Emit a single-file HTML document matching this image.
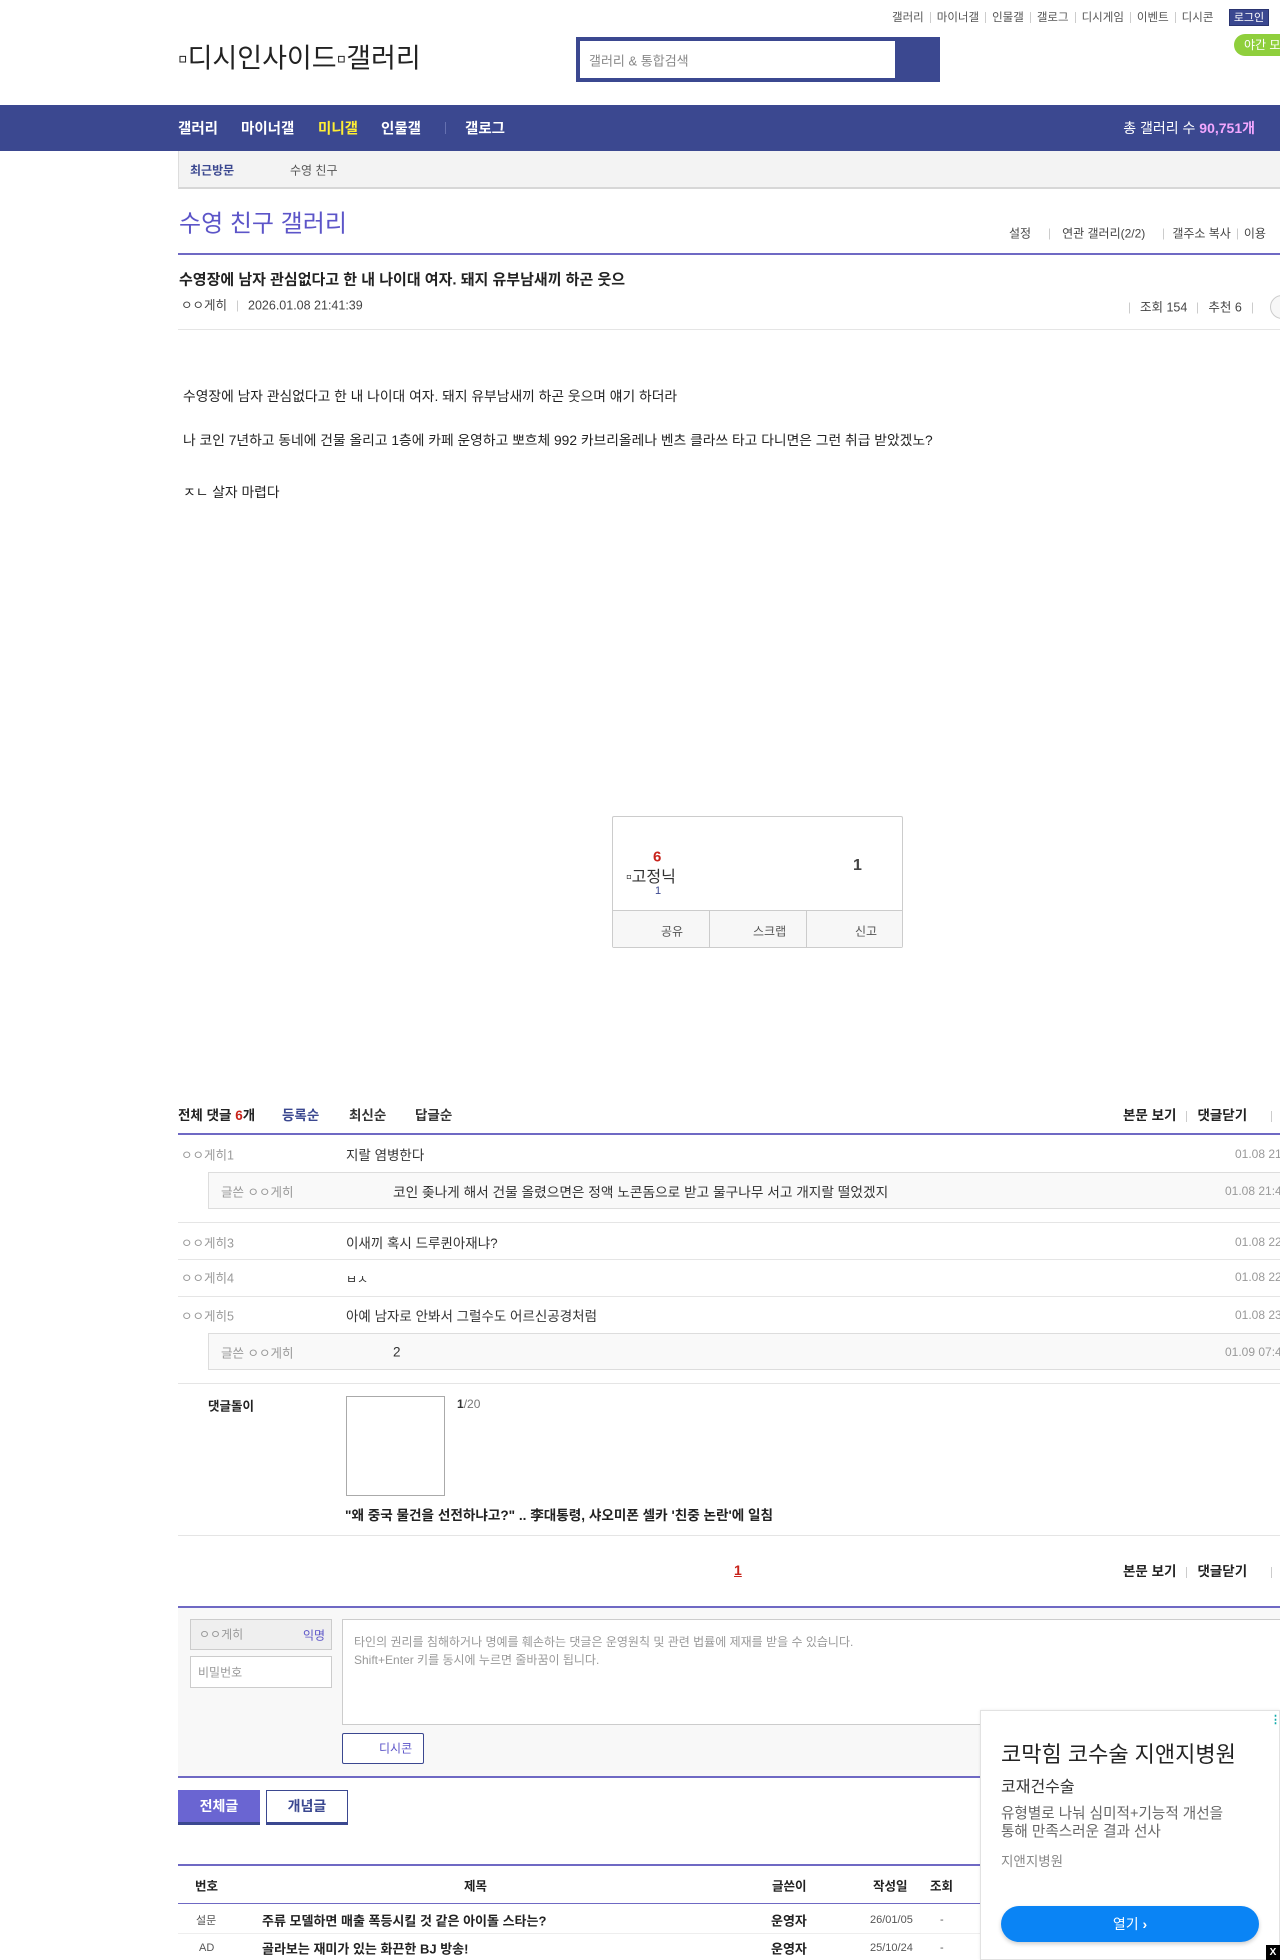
<!DOCTYPE html>
<html><head><meta charset="utf-8">
<style>
*{margin:0;padding:0;box-sizing:border-box}
html,body{width:1280px;height:1960px;overflow:hidden;background:#fff}
body{position:relative;font-family:"Liberation Sans","Noto Sans CJK KR",sans-serif;color:#333;font-size:13px}
.a{position:absolute;white-space:nowrap}
.vc{transform:translateY(-50%)}
.sep{display:inline-block;width:1px;height:11px;background:#ccc;margin:0 6px;vertical-align:middle}
.hl{position:absolute;height:1px;background:#e5e5e5}
.pl{position:absolute;height:2px;background:#6f69c4}
.gray{color:#999}
</style></head><body>

<!-- top links -->
<div class="a vc" style="left:892px;top:17px;font-size:11.5px;color:#555">갤러리<span class="sep"></span>마이너갤<span class="sep"></span>인물갤<span class="sep"></span>갤로그<span class="sep"></span>디시게임<span class="sep"></span>이벤트<span class="sep"></span>디시콘</div>
<div class="a" style="left:1229px;top:9px;width:40px;height:17px;background:#3b4890;color:#fff;font-size:11px;text-align:center;line-height:17px;border:1px solid #2a3470">로그인</div>
<div class="a" style="left:1234px;top:34px;width:60px;height:22px;background:#8fcf3c;color:#fff;font-size:12px;line-height:22px;padding-left:10px;border-radius:11px">야간 모드</div>

<!-- logo -->
<div class="a vc" style="left:178px;top:56px;font-size:27px;color:#222">▫디시인사이드▫갤러리</div>

<!-- search -->
<div class="a" style="left:576px;top:37px;width:364px;height:45px;background:#3b4890"></div>
<div class="a" style="left:580px;top:41px;width:315px;height:37px;background:#fff"></div>
<div class="a vc" style="left:589px;top:60px;font-size:13px;color:#888">갤러리 &amp; 통합검색</div>

<!-- nav -->
<div class="a" style="left:0;top:105px;width:1280px;height:46px;background:#3b4890"></div>
<div class="a vc" style="left:178px;top:128px;font-size:14.5px;font-weight:bold;color:#fff">갤러리</div>
<div class="a vc" style="left:241px;top:128px;font-size:14.5px;font-weight:bold;color:#fff">마이너갤</div>
<div class="a vc" style="left:318px;top:128px;font-size:14.5px;font-weight:bold;color:#ffee33">미니갤</div>
<div class="a vc" style="left:381px;top:128px;font-size:14.5px;font-weight:bold;color:#fff">인물갤</div>
<div class="a" style="left:445px;top:122px;width:1px;height:12px;background:#6570b0"></div>
<div class="a vc" style="left:465px;top:128px;font-size:14.5px;font-weight:bold;color:#fff">갤로그</div>
<div class="a vc" style="right:25px;top:128px;font-size:14px;color:#fff">총 갤러리 수 <b style="color:#f3a7ff">90,751개</b></div>

<!-- recent bar -->
<div class="a" style="left:178px;top:151px;width:1110px;height:38px;background:#f3f3f3;border-left:1px solid #ddd;border-bottom:2px solid #d7d7d7"></div>
<div class="a vc" style="left:190px;top:170px;font-size:12px;font-weight:bold;color:#3b4890">최근방문</div>
<div class="a vc" style="left:290px;top:170px;font-size:12px;color:#555">수영 친구</div>

<!-- gallery title -->
<div class="a vc" style="left:179px;top:221px;font-size:24px;color:#5c55c8">수영 친구 갤러리</div>
<div class="a vc" style="left:1009px;top:233px;font-size:12px;color:#444">설정<span class="sep" style="margin:0 12px 0 18px"></span>연관 갤러리(2/2)<span class="sep" style="margin:0 8px 0 18px"></span>갤주소 복사<span class="sep"></span>이용</div>
<div class="pl" style="left:178px;top:253px;width:1110px"></div>

<!-- post header -->
<div class="a vc" style="left:179px;top:279px;font-size:15px;font-weight:bold;color:#222">수영장에 남자 관심없다고 한 내 나이대 여자. 돼지 유부남새끼 하곤 웃으</div>
<div class="a vc" style="left:181px;top:304px;font-size:12.5px;color:#444">ㅇㅇ게히<span class="sep" style="margin:0 10px"></span>2026.01.08 21:41:39</div>
<div class="a vc" style="left:1129px;top:306px;font-size:12.5px;color:#444"><span class="sep" style="margin:0 10px 0 0"></span>조회 154<span class="sep" style="margin:0 10px"></span>추천 6<span class="sep" style="margin:0 10px"></span></div>
<div class="a" style="left:1270px;top:295px;width:24px;height:24px;border:1px solid #ccc;border-radius:12px;background:#f7f7f7"></div>
<div class="hl" style="left:178px;top:329px;width:1110px"></div>

<!-- body -->
<div class="a vc" style="left:183px;top:395px;font-size:13.8px;color:#222">수영장에 남자 관심없다고 한 내 나이대 여자. 돼지 유부남새끼 하곤 웃으며 얘기 하더라</div>
<div class="a vc" style="left:183px;top:439px;font-size:13.8px;color:#222">나 코인 7년하고 동네에 건물 올리고 1층에 카페 운영하고 뽀흐체 992 카브리올레나 벤츠 클라쓰 타고 다니면은 그런 취급 받았겠노?</div>
<div class="a vc" style="left:183px;top:491px;font-size:13.8px;color:#222">ㅈㄴ 살자 마렵다</div>

<!-- recommend box -->
<div class="a" style="left:612px;top:816px;width:291px;height:132px;border:1px solid #ccc;border-radius:2px"></div>
<div class="a" style="left:613px;top:910px;width:289px;height:37px;background:#f7f7f7;border-top:1px solid #ccc"></div>
<div class="a" style="left:709px;top:911px;width:1px;height:36px;background:#ccc"></div>
<div class="a" style="left:806px;top:911px;width:1px;height:36px;background:#ccc"></div>
<div class="a vc" style="left:653px;top:857px;font-size:15px;font-weight:bold;color:#c8231b">6</div>
<div class="a vc" style="left:626px;top:875px;font-size:16px;color:#333">▫고정닉</div>
<div class="a vc" style="left:655px;top:891px;font-size:11px;color:#3b4890">1</div>
<div class="a vc" style="left:853px;top:866px;font-size:16px;font-weight:bold;color:#444">1</div>
<div class="a vc" style="left:661px;top:931px;font-size:12px;color:#555">공유</div>
<div class="a vc" style="left:753px;top:931px;font-size:12px;color:#555">스크랩</div>
<div class="a vc" style="left:855px;top:931px;font-size:12px;color:#555">신고</div>

<!-- comments header -->
<div class="a vc" style="left:178px;top:1114px;font-size:13.5px;font-weight:bold;color:#222">전체 댓글 <span style="color:#c8231b">6</span>개</div>
<div class="a vc" style="left:282px;top:1114px;font-size:13.5px;font-weight:bold;color:#3b4890">등록순</div>
<div class="a vc" style="left:349px;top:1114px;font-size:13.5px;font-weight:bold;color:#333">최신순</div>
<div class="a vc" style="left:415px;top:1114px;font-size:13.5px;font-weight:bold;color:#333">답글순</div>
<div class="a vc" style="left:1123px;top:1114px;font-size:13.5px;font-weight:bold;color:#222">본문 보기<span class="sep" style="margin:0 10px"></span>댓글닫기<span class="sep" style="margin:0 0 0 24px"></span></div>
<div class="pl" style="left:178px;top:1133px;width:1110px"></div>

<!-- comments -->
<div class="a vc gray" style="left:181px;top:1154px;font-size:12.5px">ㅇㅇ게히1</div>
<div class="a vc" style="left:346px;top:1154px;font-size:13.5px;color:#333">지랄 염병한다</div>
<div class="a vc gray" style="left:1235px;top:1154px;font-size:12px">01.08 21:41</div>

<div class="a" style="left:208px;top:1172px;width:1090px;height:37px;background:#f9f9f9;border:1px solid #ddd;border-right:none"></div>
<div class="a vc gray" style="left:221px;top:1191px;font-size:12.5px">글쓴 ㅇㅇ게히</div>
<div class="a vc" style="left:393px;top:1191px;font-size:13.7px;color:#333">코인 좆나게 해서 건물 올렸으면은 정액 노콘돔으로 받고 물구나무 서고 개지랄 떨었겠지</div>
<div class="a vc gray" style="left:1225px;top:1191px;font-size:12px">01.08 21:4</div>
<div class="hl" style="left:178px;top:1222px;width:1110px"></div>

<div class="a vc gray" style="left:181px;top:1242px;font-size:12.5px">ㅇㅇ게히3</div>
<div class="a vc" style="left:346px;top:1242px;font-size:13.5px;color:#333">이새끼 혹시 드루퀸아재냐?</div>
<div class="a vc gray" style="left:1235px;top:1242px;font-size:12px">01.08 22</div>
<div class="hl" style="left:178px;top:1259px;width:1110px"></div>

<div class="a vc gray" style="left:181px;top:1277px;font-size:12.5px">ㅇㅇ게히4</div>
<div class="a vc" style="left:346px;top:1279px;font-size:12px;color:#333">ㅂㅅ</div>
<div class="a vc gray" style="left:1235px;top:1277px;font-size:12px">01.08 22</div>
<div class="hl" style="left:178px;top:1296px;width:1110px"></div>

<div class="a vc gray" style="left:181px;top:1315px;font-size:12.5px">ㅇㅇ게히5</div>
<div class="a vc" style="left:346px;top:1315px;font-size:13.5px;color:#333">아예 남자로 안봐서 그럴수도 어르신공경처럼</div>
<div class="a vc gray" style="left:1235px;top:1315px;font-size:12px">01.08 23</div>

<div class="a" style="left:208px;top:1333px;width:1090px;height:37px;background:#f9f9f9;border:1px solid #ddd;border-right:none"></div>
<div class="a vc gray" style="left:221px;top:1352px;font-size:12.5px">글쓴 ㅇㅇ게히</div>
<div class="a vc" style="left:393px;top:1352px;font-size:13.5px;color:#333">2</div>
<div class="a vc gray" style="left:1225px;top:1352px;font-size:12px">01.09 07:4</div>
<div class="hl" style="left:178px;top:1383px;width:1110px"></div>

<!-- 댓글돌이 -->
<div class="a vc" style="left:208px;top:1405px;font-size:12.5px;font-weight:bold;color:#222">댓글돌이</div>
<div class="a" style="left:346px;top:1396px;width:99px;height:100px;border:1px solid #aaa"></div>
<div class="a vc" style="left:457px;top:1404px;font-size:12px;color:#777"><b style="color:#333">1</b>/20</div>
<div class="a vc" style="left:345px;top:1514px;font-size:13.6px;font-weight:bold;color:#222">"왜 중국 물건을 선전하냐고?" .. 李대통령, 샤오미폰 셀카 '친중 논란'에 일침</div>
<div class="hl" style="left:178px;top:1535px;width:1110px"></div>

<!-- pagination -->
<div class="a vc" style="left:734px;top:1570px;font-size:14px;font-weight:bold;color:#c8231b;text-decoration:underline">1</div>
<div class="a vc" style="left:1123px;top:1570px;font-size:13.5px;font-weight:bold;color:#222">본문 보기<span class="sep" style="margin:0 10px"></span>댓글닫기<span class="sep" style="margin:0 0 0 24px"></span></div>

<!-- write area -->
<div class="a" style="left:178px;top:1606px;width:1110px;height:172px;background:#f8f8f8;border-top:2px solid #6f69c4;border-bottom:2px solid #6f69c4"></div>
<div class="a" style="left:190px;top:1619px;width:142px;height:31px;background:#efefef;border:1px solid #ccc"></div>
<div class="a vc gray" style="left:199px;top:1634px;font-size:12px">ㅇㅇ게히</div>
<div class="a vc" style="left:303px;top:1635px;font-size:12px;color:#5c55c8">익명</div>
<div class="a" style="left:190px;top:1656px;width:142px;height:32px;background:#fff;border:1px solid #ccc"></div>
<div class="a vc gray" style="left:198px;top:1672px;font-size:12px">비밀번호</div>
<div class="a" style="left:342px;top:1619px;width:950px;height:106px;background:#fff;border:1px solid #ccc"></div>
<div class="a" style="left:354px;top:1633px;font-size:12px;color:#999;line-height:18px">타인의 권리를 침해하거나 명예를 훼손하는 댓글은 운영원칙 및 관련 법률에 제재를 받을 수 있습니다.<br>Shift+Enter 키를 동시에 누르면 줄바꿈이 됩니다.</div>
<div class="a" style="left:342px;top:1733px;width:82px;height:31px;background:#fff;border:1px solid #3b4890;border-radius:2px"></div>
<div class="a vc" style="left:379px;top:1748px;font-size:12px;color:#5c55c8">디시콘</div>

<!-- list tabs -->
<div class="a" style="left:178px;top:1790px;width:82px;height:35px;background:#6a65d2;border-bottom:3px solid #3b4890;color:#fff;font-size:14px;font-weight:bold;text-align:center;line-height:33px">전체글</div>
<div class="a" style="left:266px;top:1790px;width:82px;height:35px;background:#fff;border:1px solid #3b4890;border-bottom:3px solid #3b4890;color:#3b4890;font-size:14px;font-weight:bold;text-align:center;line-height:31px">개념글</div>

<!-- table -->
<div class="pl" style="left:178px;top:1864px;width:1110px"></div>
<div class="a vc" style="left:195px;top:1885px;font-size:12.5px;font-weight:bold;color:#222">번호</div>
<div class="a vc" style="left:464px;top:1885px;font-size:12.5px;font-weight:bold;color:#222">제목</div>
<div class="a vc" style="left:772px;top:1885px;font-size:12.5px;font-weight:bold;color:#222">글쓴이</div>
<div class="a vc" style="left:873px;top:1885px;font-size:12.5px;font-weight:bold;color:#222">작성일</div>
<div class="a vc" style="left:930px;top:1885px;font-size:12.5px;font-weight:bold;color:#222">조회</div>
<div class="a" style="left:178px;top:1903px;width:1110px;height:1px;background:#6f69c4"></div>
<div class="a vc" style="left:196px;top:1920px;font-size:11px;color:#555">설문</div>
<div class="a vc" style="left:262px;top:1920px;font-size:13px;font-weight:bold;color:#222">주류 모델하면 매출 폭등시킬 것 같은 아이돌 스타는?</div>
<div class="a vc" style="left:771px;top:1920px;font-size:13px;font-weight:bold;color:#222">운영자</div>
<div class="a vc" style="left:870px;top:1920px;font-size:11px;color:#555">26/01/05</div>
<div class="a vc" style="left:940px;top:1920px;font-size:11px;color:#555">-</div>
<div class="hl" style="left:178px;top:1933px;width:1110px;background:#eee"></div>
<div class="a vc" style="left:199px;top:1948px;font-size:11px;color:#555">AD</div>
<div class="a vc" style="left:262px;top:1948px;font-size:13px;font-weight:bold;color:#222">골라보는 재미가 있는 화끈한 BJ 방송!</div>
<div class="a vc" style="left:771px;top:1948px;font-size:13px;font-weight:bold;color:#222">운영자</div>
<div class="a vc" style="left:870px;top:1948px;font-size:11px;color:#555">25/10/24</div>
<div class="a vc" style="left:940px;top:1948px;font-size:11px;color:#555">-</div>

<!-- ad -->
<div class="a" style="left:980px;top:1710px;width:300px;height:250px;background:#fff;border:1px solid #e2e2e2;box-shadow:0 0 3px rgba(0,0,0,.08)"></div>
<div class="a" style="left:1270px;top:1713px;font-size:11px;color:#1aa;font-weight:bold">⋮</div>
<div class="a vc" style="left:1001px;top:1753px;font-size:22px;color:#222">코막힘 코수술 지앤지병원</div>
<div class="a vc" style="left:1001px;top:1785px;font-size:16px;color:#333">코재건수술</div>
<div class="a" style="left:1001px;top:1805px;font-size:14.6px;color:#666;line-height:18px">유형별로 나눠 심미적+기능적 개선을<br>통해 만족스러운 결과 선사</div>
<div class="a vc" style="left:1001px;top:1860px;font-size:13.5px;color:#888">지앤지병원</div>
<div class="a" style="left:1001px;top:1906px;width:258px;height:36px;background:#0a84f5;border-radius:18px;color:#fff;font-size:14px;text-align:center;line-height:36px;box-shadow:0 2px 4px rgba(0,0,0,.2)">열기 <b>›</b></div>
<div class="a" style="left:1266px;top:1945px;width:14px;height:15px;background:#000;color:#fff;font-size:10px;font-weight:bold;text-align:center;line-height:15px">X</div>

</body></html>
